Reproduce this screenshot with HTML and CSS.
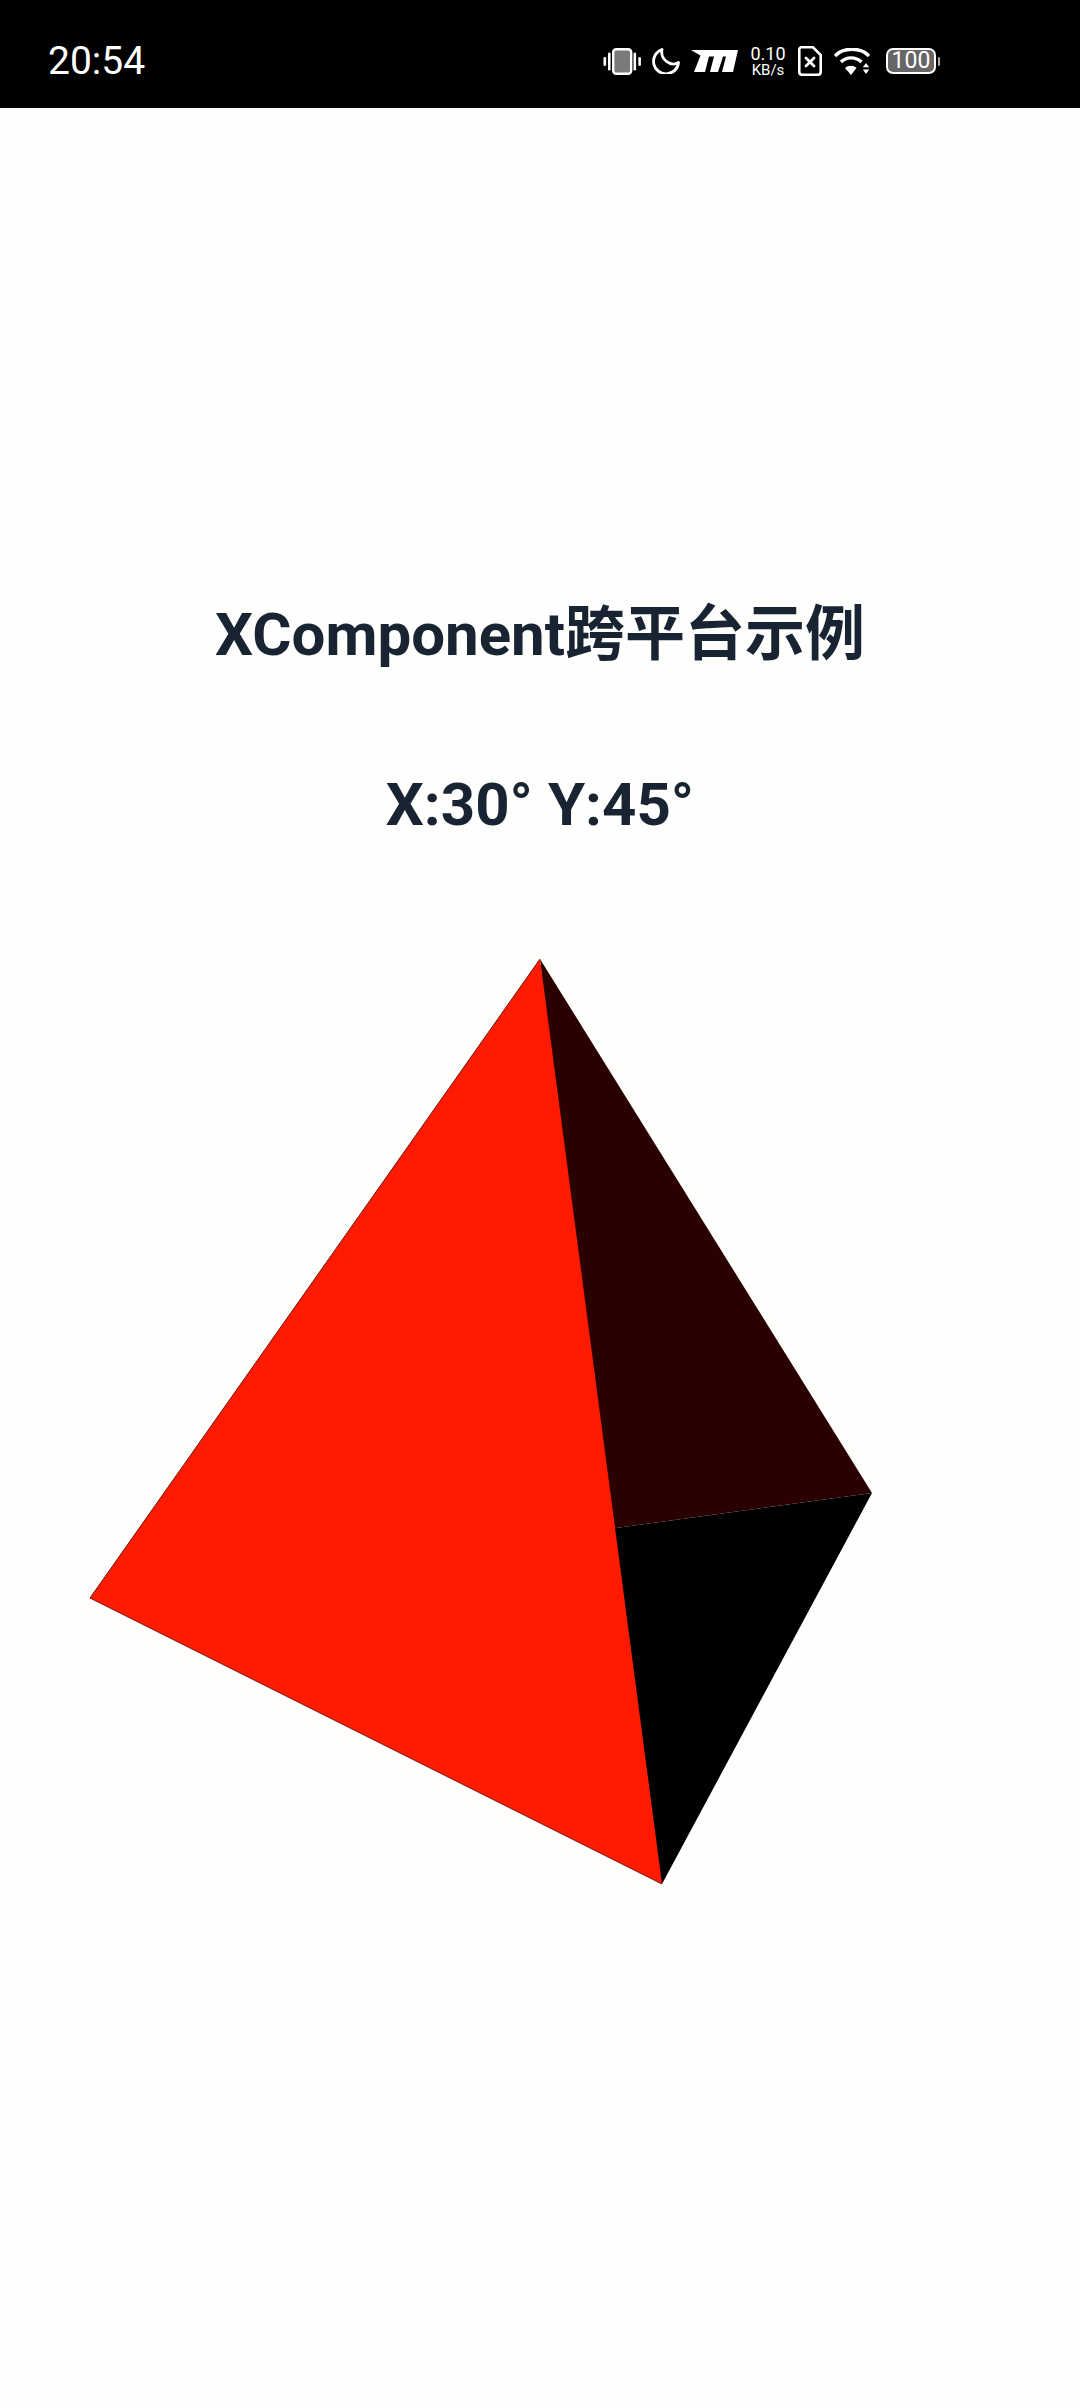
FILE: index.html
```html
<!DOCTYPE html>
<html lang="zh-CN">
<head>
    <meta charset="UTF-8">
    <meta name="viewport" content="width=device-width, initial-scale=1.0">
    <title>XComponent</title>
    <link rel="stylesheet" href="styles.css">
</head>
<body>
    <header class="status_bar">
        <span class="hora">20:54</span>
        <div class="icones">
            <!-- vibrar -->
            <svg class="ic_vibra" width="39" height="27" viewBox="0 0 39 27">
                <rect x="10.2" y="1.2" width="18" height="24.6" rx="3" fill="#7a7a7a" stroke="#fff" stroke-width="2.4"/>
                <rect x="0.5" y="9" width="2.6" height="9" rx="1.3" fill="#fff"/>
                <rect x="5" y="4.5" width="2.6" height="18" rx="1.3" fill="#fff"/>
                <rect x="30.5" y="4.5" width="2.6" height="18" rx="1.3" fill="#fff"/>
                <rect x="35.3" y="9" width="2.6" height="9" rx="1.3" fill="#fff"/>
            </svg>
            <!-- lua -->
            <svg class="ic_lua" width="28" height="26" viewBox="0 0 28 26">
                <path d="M10 1.5 A12.5 12.5 0 1 0 26.5 14.5 C19 19 8 12 10 1.5 Z" fill="none" stroke="#fff" stroke-width="2.8" stroke-linejoin="round"/>
            </svg>
            <!-- logo -->
            <svg class="ic_logo" width="47" height="22" viewBox="0 0 47 22">
                <path d="M0 0 H47 L42 22 H31 L35 6.5 H32 L27 22 H19 L23 6.5 H18 L14 22 H3 L9.5 5.5 Z" fill="#fff"/>
            </svg>
            <div class="rede"><span class="rede_valor">0.10</span><span class="rede_unid">KB/s</span></div>
            <!-- chip -->
            <svg class="ic_chip" width="24" height="30" viewBox="0 0 24 30">
                <path d="M3.5 1.3 H15 L22.7 9 V26 A2.7 2.7 0 0 1 20 28.7 H4 A2.7 2.7 0 0 1 1.3 26 V3.5 A2.2 2.2 0 0 1 3.5 1.3 Z" fill="none" stroke="#fff" stroke-width="2.6"/>
                <path d="M8 12 L16 20 M16 12 L8 20" stroke="#fff" stroke-width="2.8" stroke-linecap="round"/>
            </svg>
            <!-- wifi -->
            <svg class="ic_wifi" width="36" height="27" viewBox="0 0 36 27">
                <path d="M1 8 C9 -1 27 -1 35 8" fill="none" stroke="#fff" stroke-width="3.4"/>
                <path d="M7 14 C12 8.5 22 8.5 27.5 14" fill="none" stroke="#fff" stroke-width="3.4"/>
                <path d="M11 20 C14 17 19.5 17 22.5 20 L17 27 Z" fill="#fff"/>
                <path d="M32 15 L35.2 19.2 H28.8 Z M28.8 21.5 H35.2 L32 26 Z" fill="#fff"/>
            </svg>
            <div class="bateria">
                <div class="carga">100</div>
                <div class="bico"></div>
            </div>
        </div>
    </header>
    <main>
        <h1 class="titulo">XComponent跨平台示例</h1>
        <h2 class="angulo">X:30° Y:45°</h2>
        <svg class="tetra" width="1080" height="960" viewBox="0 0 1080 960">
            <polygon points="540,19 872,553 616,588 600,588" fill="#2a0000"/>
            <polygon points="600,588 616,588 872,553 662,944 640,930" fill="#000"/>
            <polygon points="540,19 90,658 662,944" fill="#ff1a00"/>
            <path d="M540 19 L90 658 L662 944" fill="none" stroke="#6b1a10" stroke-width="1"/>
        </svg>
    </main>
</body>
</html>
```

FILE: styles.css
```css
html, body {
    margin: 0;
    padding: 0;
}
body {
    width: 1080px;
    height: 2408px;
    overflow: hidden;
    background: #fefefc;
    font-family: Roboto, "Noto Sans CJK SC", sans-serif;
}
.status_bar {
    display: flex;
    justify-content: space-between;
    align-items: center;
    box-sizing: border-box;
    height: 108px;
    padding: 14px 140px 0 48px;
    background: #000;
    color: #fff;
}
.hora {
    font-size: 39px;
}
.icones {
    display: flex;
    align-items: center;
    gap: 12px;
}
.ic_lua {
    margin-left: -2px;
}
.ic_logo {
    margin-left: -1px;
}
.rede {
    display: flex;
    flex-direction: column;
    align-items: center;
    width: 36px;
}
.rede_valor {
    font-size: 18px;
    line-height: 18px;
}
.rede_unid {
    font-size: 15px;
    line-height: 15px;
}
.bateria {
    display: flex;
    align-items: center;
    gap: 2px;
    margin-left: 4px;
}
.carga {
    box-sizing: border-box;
    width: 50px;
    height: 26px;
    line-height: 21px;
    border: 2.5px solid #fff;
    border-radius: 7px;
    background: #666;
    text-align: center;
    font-size: 23px;
}
.bico {
    width: 2px;
    height: 9px;
    background: #aaa;
    border-radius: 1px;
}
main {
    display: flex;
    flex-direction: column;
    align-items: center;
}
.titulo {
    margin: 482px 0 0 0;
    font-size: 60px;
    line-height: 90px;
    font-weight: 700;
    color: #182431;
}
.angulo {
    margin: 80px 0 0 0;
    font-size: 60px;
    line-height: 90px;
    font-weight: 700;
    color: #182431;
}
.tetra {
    display: block;
    margin-top: 90px;
    flex: none;
}
```
